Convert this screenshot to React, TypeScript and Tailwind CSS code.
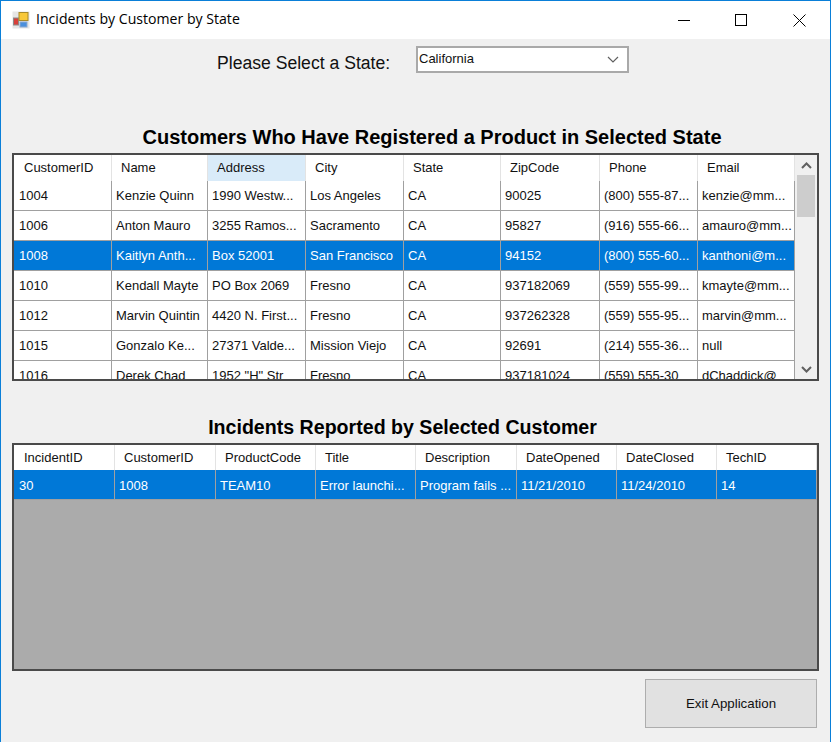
const customerCols = [98, 96, 98, 98, 97, 99, 98, 97];
const incidentCols = [101, 101, 100, 100, 101, 100, 100, 100];

const customerHeaders = ["CustomerID", "Name", "Address", "City", "State", "ZipCode", "Phone", "Email"];
const incidentHeaders = ["IncidentID", "CustomerID", "ProductCode", "Title", "Description", "DateOpened", "DateClosed", "TechID"];

const customers = [
  ["1004", "Kenzie Quinn", "1990 Westw...", "Los Angeles", "CA", "90025", "(800) 555-87...", "kenzie@mm..."],
  ["1006", "Anton Mauro", "3255 Ramos...", "Sacramento", "CA", "95827", "(916) 555-66...", "amauro@mm..."],
  ["1008", "Kaitlyn Anth...", "Box 52001", "San Francisco", "CA", "94152", "(800) 555-60...", "kanthoni@m..."],
  ["1010", "Kendall Mayte", "PO Box 2069", "Fresno", "CA", "937182069", "(559) 555-99...", "kmayte@mm..."],
  ["1012", "Marvin Quintin", "4420 N. First...", "Fresno", "CA", "937262328", "(559) 555-95...", "marvin@mm..."],
  ["1015", "Gonzalo Ke...", "27371 Valde...", "Mission Viejo", "CA", "92691", "(214) 555-36...", "null"],
  ["1016", "Derek Chad", '1952 "H" Str', "Fresno", "CA", "937181024", "(559) 555-30", "dChaddick@"],
];

const incidents = [
  ["30", "1008", "TEAM10", "Error launchi...", "Program fails ...", "11/21/2010", "11/24/2010", "14"],
];

function HeaderRow({ headers, widths, hotIndex, tall }: { headers: string[]; widths: number[]; hotIndex?: number; tall?: boolean }) {
  return (
    <div className={`flex shrink-0 bg-white ${tall ? "h-[26px]" : "h-[25px]"}`}>
      {headers.map((h, i) => (
        <div
          key={h}
          style={{ width: widths[i] }}
          className={`flex items-center border-r border-[#e3e3e3] pl-[9px] text-[13px] whitespace-nowrap first:pl-[10px] ${
            i === hotIndex ? "bg-[#d9ebf9]" : ""
          }`}
        >
          {h}
        </div>
      ))}
    </div>
  );
}

function DataRow({ cells, widths, selected, low }: { cells: string[]; widths: number[]; selected?: boolean; low?: boolean }) {
  return (
    <div className={`flex h-[30px] shrink-0 border-b border-[#a0a0a0] ${selected ? "bg-[#0078d7] text-white" : "bg-white"}`}>
      {cells.map((c, i) => (
        <div
          key={i}
          style={{ width: widths[i] }}
          className={`flex items-center overflow-hidden border-r border-[#a0a0a0] pl-[4px] text-[13px] whitespace-nowrap first:pl-[5px] ${
            low ? "pt-[3px]" : "pt-[1px]"
          }`}
        >
          {c}
        </div>
      ))}
    </div>
  );
}

function Scrollbar() {
  return (
    <div className="flex h-full w-[22px] shrink-0 flex-col items-center bg-[#f0f0f0]">
      <div className="flex h-[20px] w-full items-center justify-center">
        <svg width="11" height="7" viewBox="0 0 11 7" fill="none" stroke="#606060" strokeWidth="2">
          <path d="M1 6l4.5-4.5L10 6" />
        </svg>
      </div>
      <div className="h-[42px] w-[18px] bg-[#cdcdcd]" />
      <div className="flex-1" />
      <div className="flex h-[20px] w-full items-center justify-center">
        <svg width="11" height="7" viewBox="0 0 11 7" fill="none" stroke="#606060" strokeWidth="2">
          <path d="M1 1l4.5 4.5L10 1" />
        </svg>
      </div>
    </div>
  );
}

function AppIcon() {
  return (
    <svg width="18" height="18" viewBox="0 0 18 18" className="shrink-0">
      <rect x="0.5" y="0.5" width="17" height="17" fill="#e6e6e6" />
      <rect x="1.5" y="7" width="5" height="7" fill="#d8403a" stroke="#8a8a8a" />
      <rect x="7" y="1.5" width="9" height="8" fill="#f8c83a" stroke="#a88a2a" />
      <rect x="8" y="11" width="7" height="5" fill="#4a8fdc" stroke="#8aa8d0" />
    </svg>
  );
}

export default function App() {
  return (
    <div className="flex h-[742px] w-[831px] flex-col border-x border-t border-[#0a7fd8] bg-[#f0f0f0] font-['Liberation_Sans',sans-serif] text-[#111]">
      {/* title bar */}
      <div className="flex h-[38px] shrink-0 items-center bg-white pl-[11px]">
        <AppIcon />
        <span className="mb-[2px] ml-[6px] font-['Open_Sans',sans-serif] text-[14.1px] text-black">Incidents by Customer by State</span>
        <div className="ml-auto flex h-full items-center text-black">
          <div className="flex w-[57px] justify-center">
            <svg width="12" height="12" viewBox="0 0 12 12" stroke="#000" fill="none"><path d="M0 6.5h12" /></svg>
          </div>
          <div className="flex w-[57px] justify-center">
            <svg width="12" height="12" viewBox="0 0 12 12" stroke="#000" fill="none"><rect x="0.5" y="0.5" width="11" height="11" /></svg>
          </div>
          <div className="flex w-[61px] justify-center">
            <svg width="13" height="13" viewBox="0 0 13 13" stroke="#000" fill="none"><path d="M0.5 0.5l12 12M12.5 0.5l-12 12" /></svg>
          </div>
        </div>
      </div>

      <div className="flex flex-1 flex-col px-[11px]">
        {/* state picker */}
        <div className="mt-[7px] flex h-[27px] items-center pl-[205px]">
          <span className="w-[199px] pt-[8px] text-[17.6px]">Please Select a State:</span>
          <div className="flex h-[27px] w-[213px] items-center justify-between border-2 border-[#a9a9a9] bg-white pl-[1px] pr-[8px] text-[13px]">
            <span className="pb-[2px]">California</span>
            <svg width="12" height="7" viewBox="0 0 12 7" fill="none" stroke="#606060" strokeWidth="1.2"><path d="M1 1l5 5 5-5" /></svg>
          </div>
        </div>

        {/* customers */}
        <h2 className="mt-[53px] flex h-[22px] items-center justify-center pl-[33px] text-[20px] leading-none font-bold text-black">
          Customers Who Have Registered a Product in Selected State
        </h2>
        <div className="mt-[5px] flex h-[228px] shrink-0 overflow-hidden border-2 border-[#4a4a4a] bg-white">
          <div className="flex w-[781px] shrink-0 flex-col overflow-hidden">
            <HeaderRow headers={customerHeaders} widths={customerCols} hotIndex={2} tall />
            {customers.map((row, i) => (
              <DataRow key={row[0]} cells={row} widths={customerCols} selected={i === 2} />
            ))}
          </div>
          <Scrollbar />
        </div>

        {/* incidents */}
        <h2 className="mt-[36px] flex h-[22px] items-center justify-center pr-[26px] text-[19.6px] leading-none font-bold text-black">
          Incidents Reported by Selected Customer
        </h2>
        <div className="mt-[4px] flex h-[228px] shrink-0 flex-col overflow-hidden border-2 border-[#4a4a4a] bg-[#ababab]">
          <HeaderRow headers={incidentHeaders} widths={incidentCols} />
          {incidents.map((row) => (
            <DataRow key={row[0]} cells={row} widths={incidentCols} selected low />
          ))}
        </div>

        <div className="mt-[8px] flex justify-end">
          <button className="mr-[2px] h-[49px] w-[172px] border border-[#adadad] bg-[#e1e1e1] text-[13.3px]">Exit Application</button>
        </div>
      </div>
    </div>
  );
}
